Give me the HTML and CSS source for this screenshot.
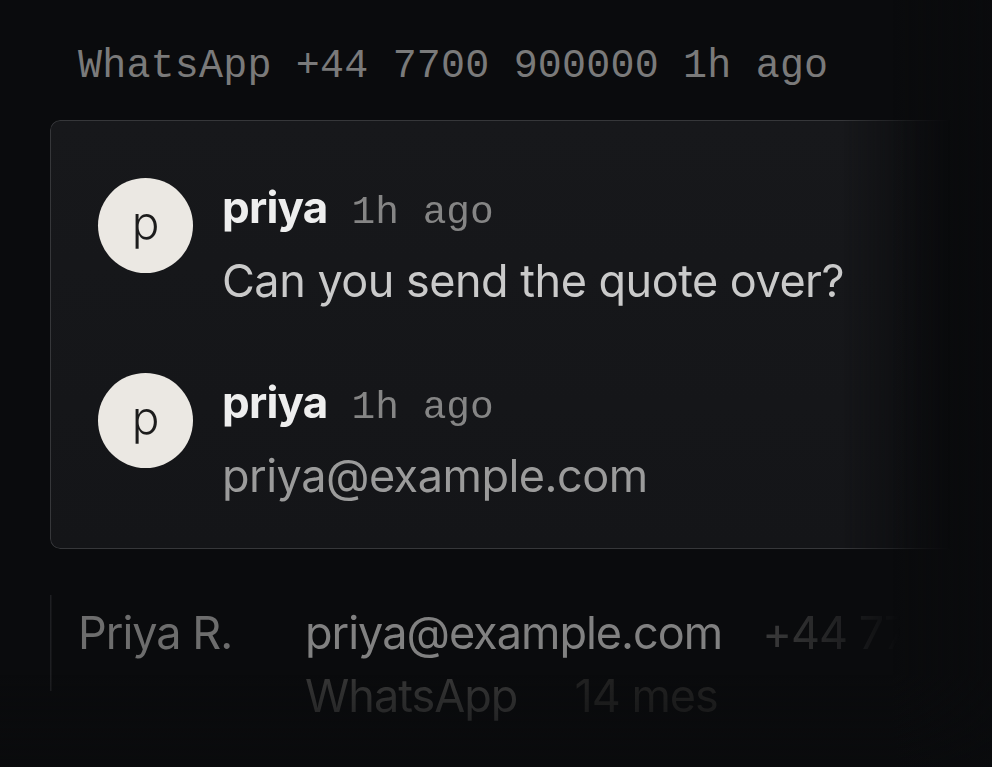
FILE: index.html
```html
<!DOCTYPE html>
<html>
<head>
    <meta charset="utf-8">
    <title>Conversation</title>
    <link rel="stylesheet" href="styles.css">
</head>
<body>
    <div class="meta">WhatsApp +44 7700 900000 1h ago</div>

    <div class="card">
        <div class="msg">
            <div class="avatar">p</div>
            <div class="msg-body">
                <div class="msg-head"><span class="name">priya</span><span class="time">1h ago</span></div>
                <div class="text">Can you send the quote over?</div>
            </div>
        </div>
        <div class="msg">
            <div class="avatar">p</div>
            <div class="msg-body">
                <div class="msg-head"><span class="name">priya</span><span class="time">1h ago</span></div>
                <div class="text dim">priya@example.com</div>
            </div>
        </div>
    </div>

    <div class="contact">
        <div class="cell name-cell">Priya R.</div>
        <div class="cell">
            <div class="row-main">
                <span>priya@example.com</span>
                <span class="phone">+44 7700</span>
            </div>
            <div class="row-sub">
                <span>WhatsApp</span>
                <span class="count">14 mes</span>
            </div>
        </div>
    </div>

    <div class="vignette"></div>
</body>
</html>
```

FILE: styles.css
```css
html, body {
    margin: 0;
    height: 100%;
    overflow: hidden;
}

body {
    background: #0a0b0d;
    font-family: Inter, "Noto Sans", sans-serif;
    color: #d0d0d0;
}

.meta {
    font-family: "Liberation Mono", "DejaVu Sans Mono", monospace;
    font-size: 40px;
    letter-spacing: 0.2px;
    color: #7a7a7a;
    padding: 42px 0 0 78px;
    line-height: 50px;
    white-space: nowrap;
}

.card {
    margin: 28px 0 0 50px;
    width: 900px;
    height: 429px;
    box-sizing: border-box;
    border: 1.5px solid #36373a;
    border-right: none;
    border-radius: 10px 0 0 10px;
    background: linear-gradient(180deg, #17181b 0%, #141518 100%);
    padding: 57px 0 0 47px;
    display: flex;
    flex-direction: column;
    gap: 50px;
    -webkit-mask-image: linear-gradient(90deg, #000 88%, transparent 100%);
    mask-image: linear-gradient(90deg, #000 88%, transparent 100%);
}

.msg {
    display: flex;
    gap: 29px;
    align-items: flex-start;
}

.avatar {
    width: 95px;
    height: 95px;
    border-radius: 50%;
    background: #ebe8e3;
    color: #1c1c1c;
    font-size: 46px;
    font-weight: 300;
    display: flex;
    align-items: center;
    justify-content: center;
    line-height: 1;
    padding-bottom: 8px;
    box-sizing: border-box;
    flex: none;
}

.msg-body {
    padding-top: 3px;
    white-space: nowrap;
}

.msg-head {
    line-height: 52px;
    display: flex;
    align-items: baseline;
    gap: 24px;
}

.name {
    font-size: 44px;
    font-weight: 700;
    letter-spacing: -0.8px;
    color: #eeeeee;
}

.time {
    font-family: "Liberation Mono", "DejaVu Sans Mono", monospace;
    font-size: 39.5px;
    color: #858585;
}

.text {
    font-size: 45px;
    letter-spacing: -0.5px;
    line-height: 84px;
    color: #cacaca;
}

.text.dim {
    color: #9b9b9b;
}

.contact {
    margin: 46px 0 0 50px;
    background: linear-gradient(#1e1f22, #1e1f22) left top / 1.5px 96px no-repeat;
    display: grid;
    grid-template-columns: 227px auto;
    padding: 6px 0 0 28px;
    white-space: nowrap;
    -webkit-mask-image: linear-gradient(90deg, #000 690px, transparent 850px);
    mask-image: linear-gradient(90deg, #000 690px, transparent 850px);
}

.cell {
    font-size: 45px;
    letter-spacing: -1px;
    line-height: 63px;
}

.name-cell {
    color: #6d6d6d;
}

.row-main {
    color: #818181;
    display: flex;
    gap: 40px;
}

.row-main .phone {
    color: #444;
}

.row-sub {
    color: #363636;
    display: flex;
    gap: 57px;
}

.row-sub .count {
    color: #222;
}

.vignette {
    position: fixed;
    inset: 0;
    pointer-events: none;
    background:
        linear-gradient(90deg, rgba(10, 11, 13, 0) 90%, rgba(10, 11, 13, 0.6) 100%),
        linear-gradient(180deg, rgba(10, 11, 13, 0) 88%, rgba(10, 11, 13, 0.8) 100%);
}
```
